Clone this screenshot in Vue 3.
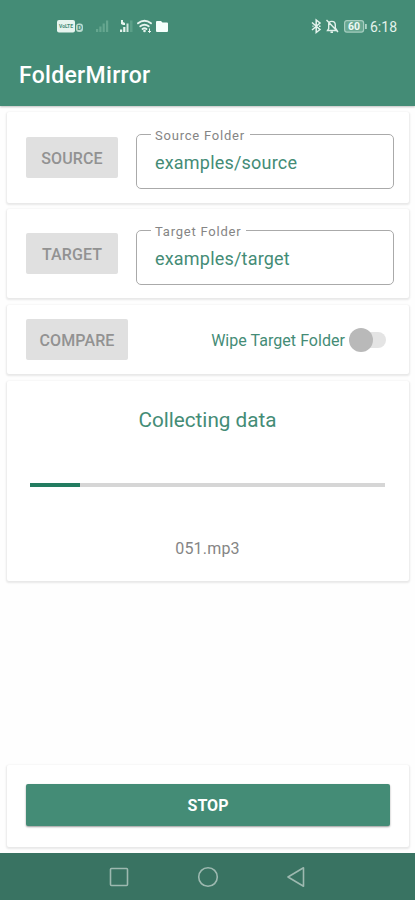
<script setup>
import { ref } from 'vue'

const folders = ref([
  { id: 'source', action: 'SOURCE', label: 'Source Folder', path: 'examples/source' },
  { id: 'target', action: 'TARGET', label: 'Target Folder', path: 'examples/target' },
])
const progress = ref(14)
const wipeTarget = ref(false)
</script>

<template>
  <div class="screen">
    <header class="top">
      <div class="status">
        <svg class="status-left" width="114" height="20" viewBox="0 0 114 20">
          <rect x="0" y="4" width="18" height="12.500" rx="2" fill="#e6f4ee" />
          <text x="9" y="12.400" text-anchor="middle" textLength="14" lengthAdjust="spacingAndGlyphs" class="volte">VoLTE</text>
          <rect x="19" y="7.500" width="7" height="8.500" rx="3" fill="#b9dacd" />
          <text x="22.500" y="14.200" text-anchor="middle" class="sim">D</text>
          <g fill="#65a68f">
            <rect x="39" y="13" width="2.200" height="3" />
            <rect x="42.300" y="10.500" width="2.200" height="5.500" />
            <rect x="45.600" y="7.500" width="2.200" height="8.500" />
            <rect x="49" y="4.500" width="2.200" height="11.500" />
          </g>
          <g fill="#e6f4ee">
            <rect x="63" y="13.500" width="2.200" height="2.500" />
            <rect x="66.200" y="11" width="2.200" height="5" />
            <path d="M64 4h2v2l2 1v2h-2l-2-1z" />
          </g>
          <rect x="69.500" y="7.500" width="2" height="8.500" fill="#cfe6dd" />
          <rect x="73" y="4.500" width="2.500" height="11.500" fill="#5b9f88" />
          <g fill="none" stroke="#e6f4ee" stroke-width="1.900" stroke-linecap="round">
            <path d="M81 7.300q6.500-5 13 0M83.300 10.300q4.200-3.300 8.400 0M85.500 13q2-1.500 4 0" />
          </g>
          <circle cx="87.500" cy="15" r="1.300" fill="#e6f4ee" />
          <path d="M92.500 12.500v4m-1.500-1.500 1.500 1.500 1.500-1.500" fill="none" stroke="#e6f4ee" />
          <path d="M100 5h4l1.500 1.500h4.500q1 0 1 1v7.500q0 1-1 1h-10q-1 0-1-1v-9q0-1 1-1z" fill="#f5fffb" />
        </svg>
        <div class="status-right">
          <svg width="58" height="20" viewBox="0 0 58 20">
            <path d="M2 6.500l8 7-3.800 3V4l3.800 3L2 14M2.500 10.200h1m5.500 0h1.500" fill="none" stroke="#e6f4ee" stroke-width="1.500" />
            <g fill="none" stroke="#e0f0ea" stroke-width="1.400">
              <path d="M17.500 14.500h9.500l-1.700-2.500V9q0-3.600-3.500-3.600T18.700 9v3.500zM16.500 4l11.500 12M20.500 16.300h2.500" />
            </g>
            <rect x="34.600" y="4.600" width="19" height="11.500" rx="2.300" fill="#68a791" stroke="#a5cdbf" stroke-width="1.200" />
            <path d="M55.900 8v5" stroke="#b6d8cb" stroke-width="1.700" />
            <text x="44" y="14" text-anchor="middle" class="battery">60</text>
          </svg>
          <span class="clock">6:18</span>
        </div>
      </div>
      <h1 class="title">FolderMirror</h1>
    </header>

    <main class="content">
      <section v-for="folder in folders" :key="folder.id" class="card folder" :class="folder.id">
        <button class="btn" disabled>{{ folder.action }}</button>
        <fieldset class="field">
          <legend>{{ folder.label }}</legend>
          <span class="path">{{ folder.path }}</span>
        </fieldset>
      </section>

      <section class="card compare">
        <button class="btn wide" disabled>COMPARE</button>
        <div class="wipe">
          <span class="wipe-label">Wipe Target Folder</span>
          <span class="switch" role="switch" :aria-checked="wipeTarget"><i class="thumb"></i></span>
        </div>
      </section>

      <section class="card collecting">
        <h2>Collecting data</h2>
        <div class="track"><div class="bar" :style="{ width: progress + '%' }"></div></div>
        <p>051.mp3</p>
      </section>

      <section class="card actions">
        <button class="stop">STOP</button>
      </section>
    </main>

    <nav class="nav">
      <svg width="20" height="22" viewBox="0 0 20 22"><rect x="1.500" y="2.500" width="17" height="17" rx="1" /></svg>
      <svg width="22" height="22" viewBox="0 0 22 22"><circle cx="11" cy="11" r="9.300" /></svg>
      <svg width="20" height="22" viewBox="0 0 20 22"><path d="M16.500 1.800v18.400L1 11z" /></svg>
    </nav>
  </div>
</template>

<style>
body {
  background: #fefefe;
}
</style>

<style scoped>
.screen {
  display: flex;
  flex-direction: column;
  width: 415px;
  height: 900px;
  overflow: hidden;
  background: #fefefe;
  font-family: Roboto, sans-serif;
}
.top {
  flex: none;
  height: 106px;
  box-sizing: border-box;
  background: #448c76;
  box-shadow: 0 1px 2px rgba(0, 0, 0, 0.25);
}
.status {
  display: flex;
  justify-content: space-between;
  height: 52px;
  padding: 16px 18px 0 57px;
  box-sizing: border-box;
}
.volte {
  font: 700 6px Roboto, sans-serif;
  fill: #448c76;
}
.sim {
  font: 700 7px Roboto, sans-serif;
  fill: #448c76;
}
.battery {
  font: 700 10.5px Roboto, sans-serif;
  fill: #f0faf6;
}
.status-right {
  display: flex;
  gap: 2px;
}
.clock {
  color: #e3f2ec;
  font-size: 14px;
  line-height: 22px;
}
.title {
  margin: 0;
  padding-left: 19px;
  color: #fff;
  font-size: 23px;
  font-weight: 500;
  line-height: 47px;
  letter-spacing: 0.3px;
}
.content {
  flex: 1;
  display: flex;
  flex-direction: column;
  padding: 6px 6px 6px 7px;
}
.card {
  box-sizing: border-box;
  border-radius: 2px;
  background: #fff;
  box-shadow: 0 1px 2px 1px rgba(0, 0, 0, 0.09);
}
.folder {
  display: flex;
  align-items: flex-start;
  gap: 18px;
  padding: 14px 15px 0 19px;
}
.source {
  height: 91px;
  margin-bottom: 6px;
}
.target {
  height: 89px;
  margin-bottom: 7px;
  padding-top: 13px;
}
.btn {
  width: 92px;
  height: 41px;
  margin: 0;
  padding: 2px 0 0;
  border: 0;
  border-radius: 2px;
  background: #e0e0e0;
  color: #929292;
  font: 500 16px Roboto, sans-serif;
  letter-spacing: 0.1px;
}
.folder .btn {
  margin-top: 11px;
}
.btn.wide {
  width: 102px;
}
.field {
  flex: 1;
  min-width: 0;
  height: 63px;
  margin: 0;
  padding: 0 0 0 18px;
  box-sizing: border-box;
  border: 1px solid #aaa;
  border-radius: 5px;
}
.field legend {
  height: 16px;
  margin-left: -4px;
  padding: 0 5px 0 4px;
  color: #858585;
  font-size: 13px;
  line-height: 20px;
  letter-spacing: 0.78px;
}
.path {
  display: block;
  margin-top: 10px;
  color: #448c76;
  font-size: 18px;
  line-height: 22px;
  letter-spacing: 0.2px;
}
.compare {
  display: flex;
  align-items: center;
  justify-content: space-between;
  height: 69px;
  margin-bottom: 7px;
  padding: 0 23px 0 19px;
}
.wipe {
  display: flex;
  align-items: center;
  gap: 8px;
  color: #448c76;
  font-size: 16px;
  letter-spacing: 0.04px;
}
.wipe-label {
  padding-top: 2px;
}
.switch {
  display: flex;
  align-items: center;
  width: 33px;
  height: 16px;
  border-radius: 8px;
  background: #e4e4e4;
}
.thumb {
  flex: none;
  width: 24px;
  height: 24px;
  margin-left: -4px;
  border-radius: 50%;
  background: #b9b9b9;
}
.collecting {
  display: flex;
  flex-direction: column;
  align-items: center;
  height: 200px;
  padding: 24px 24px 0 23px;
}
.collecting h2 {
  margin: 0;
  color: #448c76;
  font-size: 20.7px;
  font-weight: 400;
  line-height: 30px;
}
.track {
  width: 355px;
  height: 4px;
  margin-top: 48px;
  background: #d6d6d6;
}
.bar {
  height: 100%;
  background: #237c60;
}
.collecting p {
  margin: 52px 0 0;
  color: #858585;
  font-size: 16px;
  line-height: 20px;
  letter-spacing: 0.2px;
}
.actions {
  height: 82px;
  margin-top: auto;
  padding: 19px 19px 0;
}
.stop {
  display: block;
  width: 100%;
  height: 42px;
  padding: 0;
  border: 0;
  border-radius: 2px;
  background: #448c76;
  box-shadow: 0 1px 2px rgba(0, 0, 0, 0.4);
  color: #fff;
  font: 700 16px Roboto, sans-serif;
}
.nav {
  flex: none;
  display: flex;
  align-items: center;
  justify-content: center;
  gap: 68px;
  height: 47px;
  background: #397362;
}
.nav svg {
  fill: none;
  stroke: #9db9b0;
  stroke-width: 1.6;
  stroke-linejoin: round;
}
</style>
